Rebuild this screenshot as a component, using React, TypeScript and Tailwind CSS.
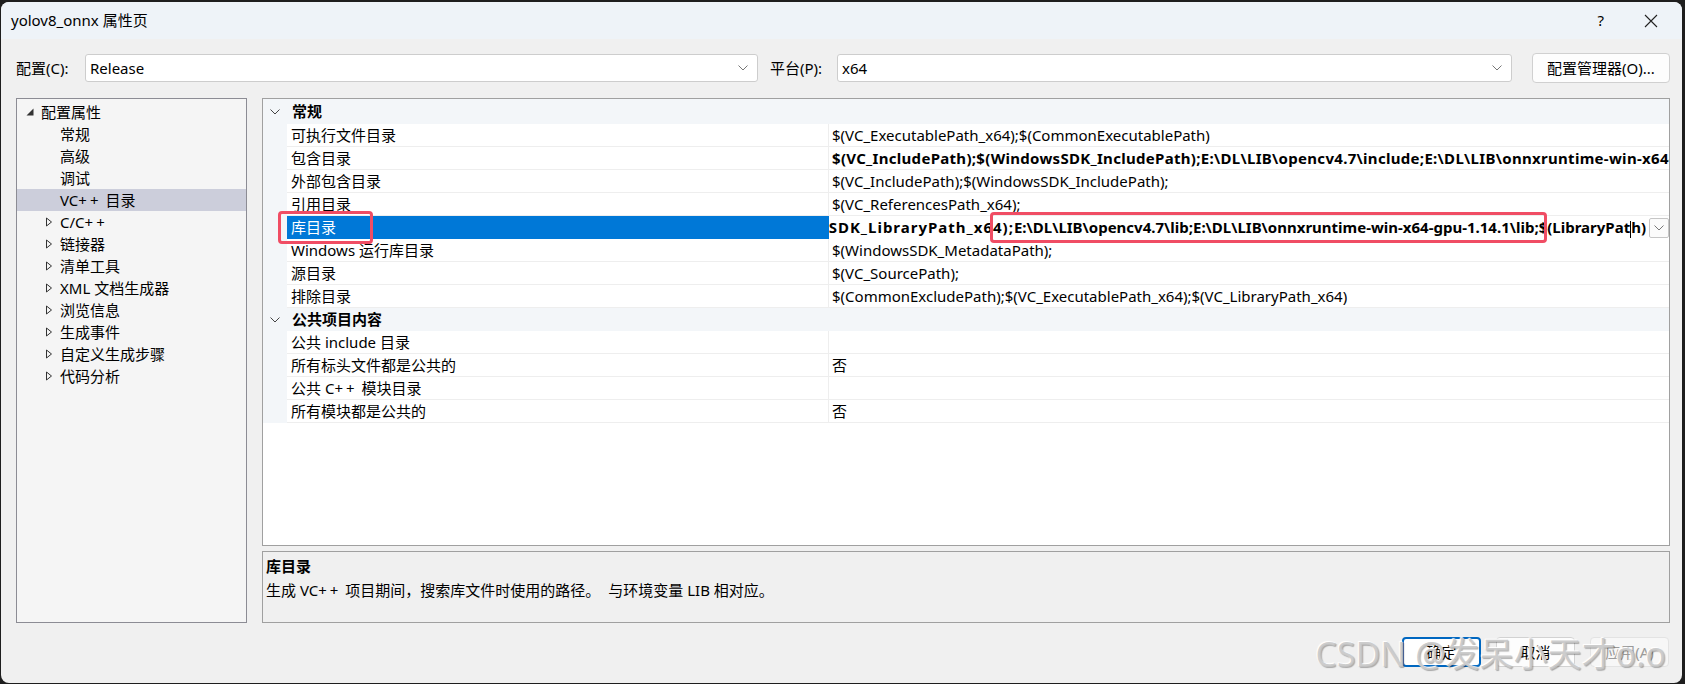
import type { ReactNode } from "react";

const FONT = "font-['Segoe_UI','Noto_Sans','Noto_Sans_CJK_SC',sans-serif]";

const Chevron = () => (
  <svg width="10" height="6" viewBox="0 0 10 6">
    <path d="M0.5 0.5 L5 5 L9.5 0.5" fill="none" stroke="currentColor" strokeWidth="1" />
  </svg>
);

// the "++" in the reference font is a little wider
const PP = () => <span className="tracking-[3px]">++</span>;

const tree: { label: ReactNode; key: string; level: number; icon?: string; selected?: boolean }[] = [
  { key: "root", label: "配置属性", level: 0, icon: "open" },
  { key: "general", label: "常规", level: 1 },
  { key: "adv", label: "高级", level: 1 },
  { key: "debug", label: "调试", level: 1 },
  { key: "vc", label: <>VC<PP /> 目录</>, level: 1, selected: true },
  { key: "cc", label: <>C/C<PP /></>, level: 1, icon: "closed" },
  { key: "link", label: "链接器", level: 1, icon: "closed" },
  { key: "manifest", label: "清单工具", level: 1, icon: "closed" },
  { key: "xml", label: "XML 文档生成器", level: 1, icon: "closed" },
  { key: "browse", label: "浏览信息", level: 1, icon: "closed" },
  { key: "events", label: "生成事件", level: 1, icon: "closed" },
  { key: "custom", label: "自定义生成步骤", level: 1, icon: "closed" },
  { key: "analysis", label: "代码分析", level: 1, icon: "closed" },
];

type Prop = { key: string; name: ReactNode; value: string; bold?: boolean; editing?: boolean };

const general: Prop[] = [
  { key: "exe", name: "可执行文件目录", value: "$(VC_ExecutablePath_x64);$(CommonExecutablePath)" },
  {
    key: "inc",
    name: "包含目录",
    value:
      "$(VC_IncludePath);$(WindowsSDK_IncludePath);E:\\DL\\LIB\\opencv4.7\\include;E:\\DL\\LIB\\onnxruntime-win-x64-gpu-1.14.1\\include;$(IncludePath)",
    bold: true,
  },
  { key: "ext", name: "外部包含目录", value: "$(VC_IncludePath);$(WindowsSDK_IncludePath);" },
  { key: "ref", name: "引用目录", value: "$(VC_ReferencesPath_x64);" },
  { key: "lib", name: "库目录", value: "", editing: true },
  { key: "winrt", name: "Windows 运行库目录", value: "$(WindowsSDK_MetadataPath);" },
  { key: "src", name: "源目录", value: "$(VC_SourcePath);" },
  { key: "excl", name: "排除目录", value: "$(CommonExcludePath);$(VC_ExecutablePath_x64);$(VC_LibraryPath_x64)" },
];

const shared: Prop[] = [
  { key: "pinc", name: "公共 include 目录", value: "" },
  { key: "phdr", name: "所有标头文件都是公共的", value: "否" },
  { key: "pmod", name: <>公共 C<PP /> 模块目录</>, value: "" },
  { key: "pall", name: "所有模块都是公共的", value: "否" },
];

const Category = ({ title, first }: { title: string; first?: boolean }) => (
  <div className={`flex items-center bg-[#f3f6f9] ${first ? "h-[25px]" : "h-[23px]"}`}>
    <div className="flex w-[24px] shrink-0 justify-center text-[#444]">
      <Chevron />
    </div>
    <span className="pl-[5px] font-bold">{title}</span>
  </div>
);

const EditRow = ({ name }: { name: ReactNode }) => (
  <div className="flex h-[23px]">
    <div className="w-[24px] shrink-0 bg-[#f3f6f9]" />
    <div className="relative flex w-[542px] shrink-0 items-center bg-[#0078d7] pl-[4px] text-white">
      <span>{name}</span>
      {/* annotation */}
      <span className="absolute left-[-9px] top-[-5px] h-[33px] w-[95px] rounded-[4px] border-[3px] border-[#f04d64]" />
    </div>
    <div className="relative flex min-w-0 flex-1 items-center bg-white">
      <div className="flex min-w-0 flex-1 justify-end overflow-hidden whitespace-nowrap font-bold">
        <span className="shrink-0">
          <span className="tracking-[1px]">$(WindowsSDK_LibraryPath_x64);</span>
          E:\DL\LIB\opencv4.7\lib;E:\DL\LIB\onnxruntime-win-x64-gpu-1.14.1\lib;$(LibraryPat
          <span className="inline-block h-[17px] w-px bg-black align-middle" />
          h)
        </span>
      </div>
      <div className="ml-[3px] flex h-[20px] w-[20px] shrink-0 items-center justify-center rounded-[2px] border border-[#c6c6c6] bg-[#fbfbfb] text-[#777]">
        <Chevron />
      </div>
      {/* annotation */}
      <span className="absolute left-[161px] top-[-4px] h-[31px] w-[557px] rounded-[4px] border-[3px] border-[#f04d64]" />
    </div>
  </div>
);

const PropRow = ({ name, value, bold, editing }: Omit<Prop, "key">) => {
  if (editing) return <EditRow name={name} />;
  return (
    <div className="flex h-[23px]">
      <div className="w-[24px] shrink-0 bg-[#f3f6f9]" />
      <div className="flex w-[542px] shrink-0 items-center whitespace-nowrap border-b border-r border-[#eeeeee] pl-[4px]">
        <span>{name}</span>
      </div>
      <div
        className={`flex min-w-0 flex-1 items-center overflow-hidden whitespace-nowrap border-b border-[#eeeeee] pl-[3px] ${
          bold ? "font-bold tracking-[0.3px]" : ""
        }`}
      >
        {value}
      </div>
    </div>
  );
};

const Combo = ({ value, width }: { value: string; width: string }) => (
  <div
    className={`flex h-[28px] ${width} items-center justify-between rounded-[3px] border border-[#cdcdcd] bg-white pl-[4px] pr-[9px]`}
  >
    <span>{value}</span>
    <span className="text-[#777]">
      <Chevron />
    </span>
  </div>
);

export default function App() {
  return (
    <div className={`h-[684px] w-[1685px] overflow-hidden bg-[#1e1e1e] pb-px pl-px pr-[3px] pt-[2px] text-[15px] text-black ${FONT}`}>
      <div className="relative flex h-full flex-col overflow-hidden rounded-[8px] bg-[#f0f0f0]">
        {/* TITLE BAR */}
        <div className="flex h-[37px] shrink-0 items-center justify-between bg-[#eef3f8] pl-[10px] pr-[24px]">
          <span>yolov8_onnx 属性页</span>
          <div className="flex items-center gap-[40px]">
            <span className="text-[15px]">?</span>
            <svg width="14" height="14" viewBox="0 0 14 14">
              <path d="M1 1 L13 13 M13 1 L1 13" stroke="#222" strokeWidth="1.1" />
            </svg>
          </div>
        </div>

        {/* CONFIG ROW */}
        <div className="mt-[14px] flex h-[30px] shrink-0 items-center pl-[15px] pr-[12px]">
          <span className="w-[69px] shrink-0">配置(C):</span>
          <Combo value="Release" width="w-[673px]" />
          <span className="ml-[12px] w-[67px] shrink-0">平台(P):</span>
          <Combo value="x64" width="w-[675px]" />
          <button className="ml-auto h-[30px] w-[138px] rounded-[4px] border border-[#d0d0d0] bg-[#fdfdfd]">
            配置管理器(O)...
          </button>
        </div>

        {/* MAIN */}
        <div className="mt-[15px] flex h-[525px] shrink-0 gap-[15px] pl-[15px] pr-[12px]">
          {/* tree */}
          <div className="w-[231px] shrink-0 border border-[#8c8c94] bg-[#f5f5f5] pt-[2px]">
            {tree.map((item) => (
              <div
                key={item.key}
                className={`flex h-[22px] items-center ${item.selected ? "bg-[#cccedb]" : ""} ${
                  item.level === 0 ? "pl-[9px]" : "pl-[28px]"
                }`}
              >
                <span className="flex w-[15px] shrink-0 items-center">
                  {item.icon === "open" && (
                    <svg width="8" height="8" viewBox="0 0 8 8">
                      <path d="M7.5 0.5 V7.5 H0.5 Z" fill="#333" />
                    </svg>
                  )}
                  {item.icon === "closed" && (
                    <svg width="8" height="10" viewBox="0 0 8 10">
                      <path d="M1.5 1 L6.5 5 L1.5 9 Z" fill="none" stroke="#333" strokeWidth="1" />
                    </svg>
                  )}
                </span>
                <span className="whitespace-nowrap">{item.label}</span>
              </div>
            ))}
          </div>

          {/* grid + description */}
          <div className="flex min-w-0 flex-1 flex-col gap-[5px]">
            <div className="h-[448px] shrink-0 overflow-hidden border border-[#a0a0a0] bg-white">
              <Category title="常规" first />
              {general.map(({ key, ...p }) => (
                <PropRow key={key} {...p} />
              ))}
              <Category title="公共项目内容" />
              {shared.map(({ key, ...p }) => (
                <PropRow key={key} {...p} />
              ))}
            </div>
            <div className="flex-1 border border-[#a0a0a0] bg-[#f0f0f0] px-[3px] pt-[3px]">
              <div className="font-bold leading-[23px]">库目录</div>
              <div className="leading-[24px]">
                生成 VC<PP /> 项目期间，搜索库文件时使用的路径。<span className="ml-[8px]">与环境变量 LIB 相对应。</span>
              </div>
            </div>
          </div>
        </div>

        {/* BUTTONS */}
        <div className="mt-[14px] flex h-[30px] shrink-0 justify-end gap-[15px] pl-[15px] pr-[13px]">
          <button className="w-[79px] rounded-[4px] border-2 border-[#0067c0] bg-white">确定</button>
          <button className="w-[79px] rounded-[4px] border border-[#d2d2d2] bg-[#fdfdfd]">取消</button>
          <button className="w-[79px] rounded-[4px] border border-[#e3e3e3] bg-[#f7f7f7] text-[#9a9a9a]">应用(A)</button>
        </div>

        {/* watermark */}
        <div className="pointer-events-none absolute bottom-[12px] right-[16px] whitespace-nowrap text-[34px] leading-none text-[#c4c4c4]/85 [text-shadow:-1px_-1px_1px_#ffffff,1px_1px_1px_rgba(0,0,0,0.3)]">
          CSDN @发呆小天才o.o
        </div>
      </div>
    </div>
  );
}
